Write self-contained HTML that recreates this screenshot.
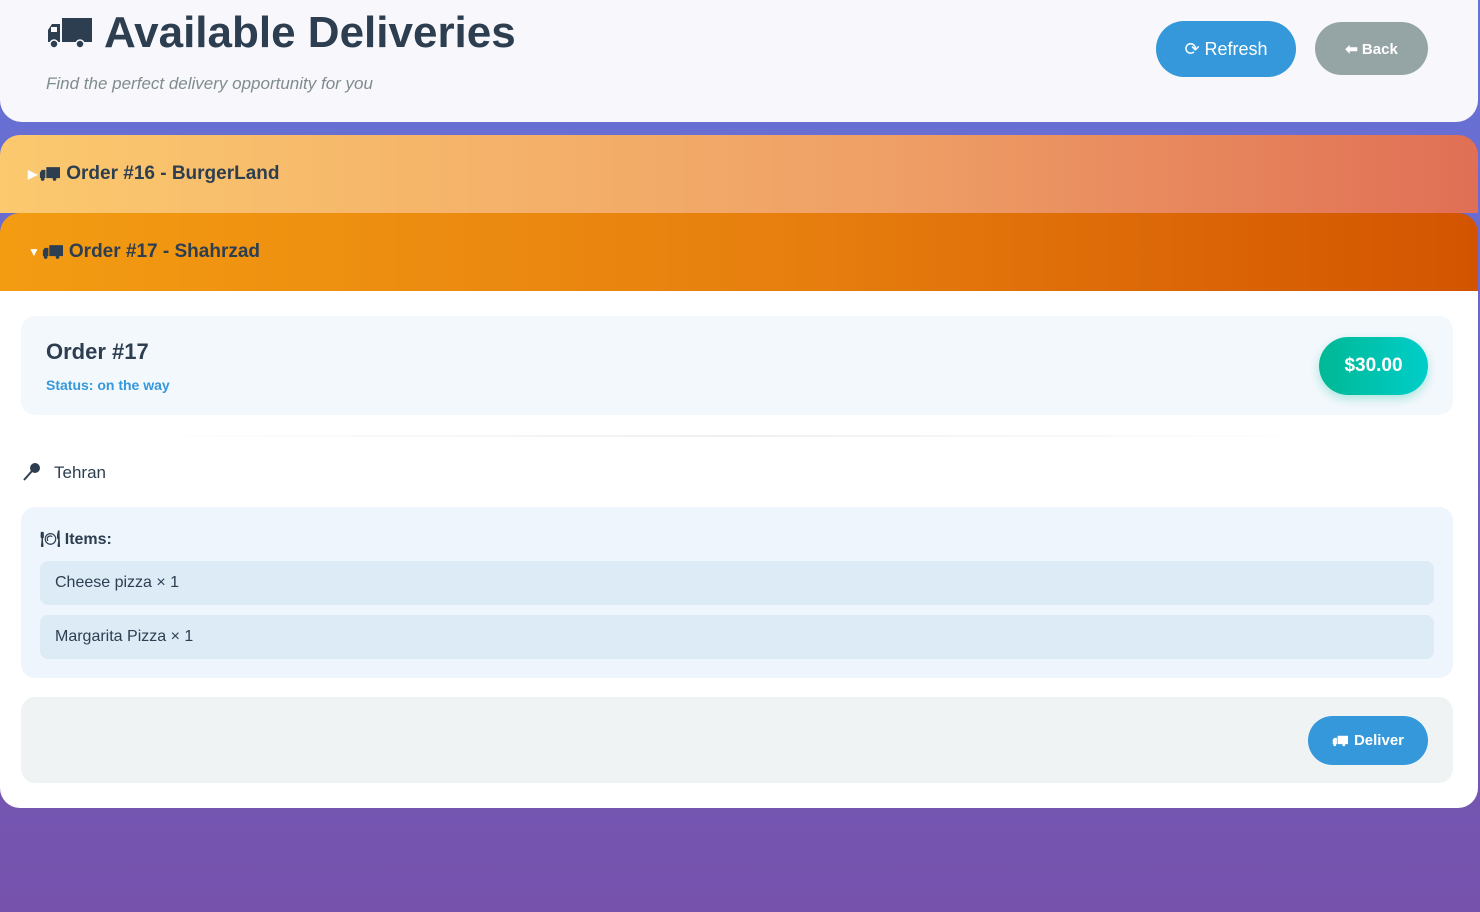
<!DOCTYPE html>
<html><head><style>
*{box-sizing:border-box;margin:0;padding:0}
body{width:1480px;height:912px;overflow:hidden;font-family:"Liberation Sans",sans-serif;background:linear-gradient(180deg,#6674d8 0%,#6f62c4 50%,#7652ac 100%);position:relative;color:#2c3e50}
.hdr{position:absolute;left:0;top:0;width:1478px;height:122px;background:#f7f7fc;border-radius:0 0 22px 22px}
.hdr h1{position:absolute;left:46px;top:8px;font-size:44px;font-weight:bold;color:#2c3e50;display:flex;align-items:center;gap:12px}
.hdr p{position:absolute;left:46px;top:74px;font-size:17px;font-style:italic;color:#7f8c8d}
.btn{position:absolute;border-radius:30px;color:#fff;display:flex;align-items:center;justify-content:center;gap:6px}
.acc{position:absolute;left:0;width:1478px;height:78px;border-radius:20px 20px 0 0;display:flex;align-items:center;padding-left:28px;font-weight:bold;font-size:19px;color:#2c3e50;gap:2px}
.panel{position:absolute;left:0;top:291px;width:1478px;height:517px;background:#fff;border-radius:0 0 20px 20px}
.box{position:absolute;left:21px;width:1432px;border-radius:14px}
.item{position:absolute;left:19px;width:1394px;height:44px;background:#ddebf7;border-radius:8px;font-size:16px;padding:13px 15px;color:#2c3e50}
</style></head><body>
<svg width="0" height="0" style="position:absolute"><defs><symbol id="t" viewBox="0 0 46 34"><rect x="16" y="2" width="30" height="24" fill="currentColor"/><path d="M2 14 L6 8 H14 V26 H2 Z" fill="currentColor"/><circle cx="8" cy="28" r="4" fill="currentColor"/><circle cx="34" cy="28" r="4" fill="currentColor"/></symbol></defs></svg>
<div class="hdr">
<h1><svg width="46" height="34" viewBox="0 0 46 34"><rect x="16" y="2" width="30" height="24" fill="#2c3e50"/><path d="M2 14 L6 8 H14 V26 H2 Z" fill="#2c3e50"/><rect x="5" y="11" width="6" height="5" fill="#f7f7fc"/><circle cx="8" cy="28" r="4" fill="#2c3e50" stroke="#f7f7fc" stroke-width="1.5"/><circle cx="34" cy="28" r="4" fill="#2c3e50" stroke="#f7f7fc" stroke-width="1.5"/></svg>Available Deliveries</h1>
<p>Find the perfect delivery opportunity for you</p>
<div class="btn" style="left:1156px;top:21px;width:140px;height:56px;background:#3498db;font-size:18px">⟳ Refresh</div>
<div class="btn" style="left:1315px;top:22px;width:113px;height:53px;background:#95a5a6;font-size:15px;font-weight:bold">⬅ Back</div>
</div>
<div class="acc" style="top:135px;background:linear-gradient(90deg,#fbc96e,#efa066 60%,#e06f55)"><span style="color:#fff;font-size:12px">▶</span><svg width="21" height="16" style="color:#2c3e50;margin-right:4px"><use href="#t"/></svg>Order #16 - BurgerLand</div>
<div class="acc" style="top:213px;background:linear-gradient(90deg,#f39c12,#e67e0e 55%,#d35400)"><span style="color:#fff;font-size:12px">▼</span><svg width="21" height="16" style="color:#2c3e50;margin-right:4px"><use href="#t"/></svg>Order #17 - Shahrzad</div>
<div class="panel">
<div class="box" style="top:25px;height:99px;background:#f3f8fd">
<div style="position:absolute;left:25px;top:23px;font-size:22px;font-weight:bold">Order #17</div>
<div style="position:absolute;left:25px;top:61px;font-size:14px;font-weight:bold;color:#3498db">Status: on the way</div>
<div class="btn" style="left:1298px;top:21px;width:109px;height:58px;background:linear-gradient(90deg,#00b894,#00cec9);font-size:19px;font-weight:bold;box-shadow:0 4px 10px rgba(0,184,148,.3)">$30.00</div>
</div>
<div style="position:absolute;left:120px;top:144px;width:1220px;height:2px;background:linear-gradient(90deg,transparent,#eef0f2,transparent)"></div>
<svg style="position:absolute;left:22px;top:171px" width="20" height="20" viewBox="0 0 20 20"><circle cx="13" cy="6" r="5" fill="#2c3e50"/><path d="M10 9 L2 18" stroke="#2c3e50" stroke-width="2"/></svg>
<div style="position:absolute;left:54px;top:172px;font-size:17px">Tehran</div>
<div class="box" style="top:216px;height:171px;background:#eef5fc">
<div style="position:absolute;left:19px;top:22px;font-size:16px;font-weight:bold">🍽 Items:</div>
<div class="item" style="top:54px">Cheese pizza × 1</div>
<div class="item" style="top:108px">Margarita Pizza × 1</div>
</div>
<div class="box" style="top:406px;height:86px;background:#f0f3f4">
<div class="btn" style="left:1287px;top:19px;width:120px;height:49px;background:#3498db;font-size:15px;font-weight:bold"><svg width="16" height="12" style="color:#fff"><use href="#t"/></svg>Deliver</div>
</div>
</div>
</body></html>
